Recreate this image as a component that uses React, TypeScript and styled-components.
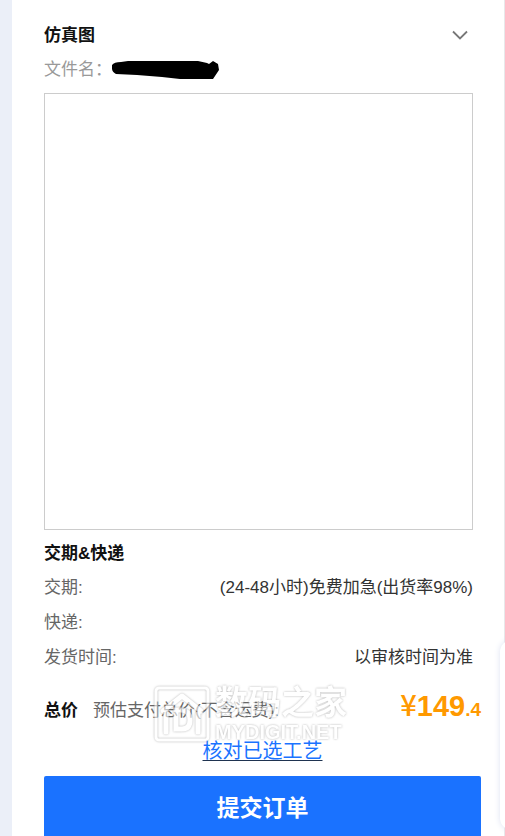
import React from "react";
import styled, { createGlobalStyle } from "styled-components";

const GlobalStyle = createGlobalStyle`
  * { box-sizing: border-box; }
  body {
    margin: 0;
    background: #ebeff8;
    color: #333;
    font: 17px/24px "Liberation Sans", "Noto Sans CJK SC", sans-serif;
  }
`;

const Page = styled.div`
  position: relative;
  min-height: 100vh;
  padding-left: 12px;
  overflow: hidden;
`;

const Panel = styled.main`
  display: flex;
  flex-direction: column;
  min-height: 100vh;
  padding-top: 24px;
  background: #fff;
  border-right: 1px solid #e8e8ea;
`;

const Section = styled.section`
  display: flex;
  flex-direction: column;
  padding: 0 31px 0 32px;
`;

const SectionHeader = styled.header`
  display: flex;
  align-items: center;
  justify-content: space-between;
`;

const Title = styled.h2`
  margin: 0;
  color: #111;
  font-size: 17px;
  line-height: 24px;
  font-weight: 700;
`;

const Toggle = styled.button`
  display: flex;
  padding: 0 5px;
  border: 0;
  background: none;
  cursor: pointer;
`;

const FileRow = styled.div`
  display: flex;
  align-items: center;
  margin-top: 10px;
  color: #999;
`;

const Preview = styled.div`
  height: 437px;
  margin: 11px 0 12px;
  border: 1px solid #ccc;
`;

const Details = styled.dl`
  display: flex;
  flex-direction: column;
  gap: 11px;
  margin: 10px 0 0;
`;

const DetailRow = styled.div`
  display: flex;
  justify-content: space-between;
`;

const Term = styled.dt`
  color: #666;
`;

const Value = styled.dd`
  margin: 0;
  color: #333;
`;

const Summary = styled.section`
  display: flex;
  flex-direction: column;
  flex: 1;
  padding: 0 23px 0 32px;
`;

const TotalRow = styled.div`
  position: relative;
  display: flex;
  align-items: baseline;
  margin-top: 18px;
  height: 37px;
`;

const TotalNote = styled.span`
  margin-left: 15px;
  color: #666;
`;

const Price = styled.strong`
  margin-left: auto;
  color: #ff9900;
  font-size: 29px;
  line-height: 36px;
`;

const Yen = styled.span`
  font-family: "Noto Sans CJK SC", sans-serif;
  font-weight: 500;
  line-height: 1;
`;

const Cents = styled.span`
  font-size: 19px;
  line-height: 1;
`;

const CheckLink = styled.a`
  align-self: center;
  margin-top: 12px;
  color: #1a73ff;
  font-size: 20px;
  line-height: 28px;
  text-decoration: underline #1f3350 1px;
  text-underline-offset: 2px;
`;

const Submit = styled.button`
  flex: 1;
  min-height: 60px;
  margin-top: 11px;
  padding: 3px 0 0;
  border: 0;
  border-radius: 2px 2px 0 0;
  background: #1a72ff;
  color: #fff;
  font: 700 23px/32px "Liberation Sans", "Noto Sans CJK SC", sans-serif;
  cursor: pointer;
`;

const Watermark = styled.div`
  position: absolute;
  left: 110px;
  top: -3px;
  display: flex;
  align-items: center;
  gap: 5px;
  color: #fff;
  opacity: 0.6;
  filter: drop-shadow(0 0 1px #888);
  pointer-events: none;
`;

const WatermarkText = styled.div`
  display: flex;
  flex-direction: column;
  font-weight: 700;
`;

const WatermarkName = styled.span`
  font-size: 33px;
  line-height: 36px;
`;

const WatermarkSite = styled.span`
  font-size: 20px;
  line-height: 22px;
`;

const SideDock = styled.aside`
  position: absolute;
  right: -55px;
  bottom: 6px;
  width: 60px;
  height: 190px;
  border-radius: 12px;
  background: #fff;
  box-shadow: 0 0 6px #dde2f2;
`;

const details = [
  { term: "交期:", value: "(24-48小时)免费加急(出货率98%)" },
  { term: "快递:", value: "" },
  { term: "发货时间:", value: "以审核时间为准" },
];

const Chevron = () => (
  <svg width="16" height="12" viewBox="0 0 16 12" fill="none" aria-hidden="true">
    <path d="M1 1.5 8 8.5 15 1.5" stroke="#777" strokeWidth="1.8" />
  </svg>
);

const Redaction = () => (
  <svg width="110" height="22" viewBox="2 0 110 22" aria-hidden="true">
    <path d="M2 6Q4 3 11 3L18 2H88L97 4 99 5 103 2 108 5 109 11 103 20H70L52 18 27 16 6 15Q1 13 2 6Z" />
  </svg>
);

const WatermarkLogo = () => (
  <svg width="56" height="56" viewBox="0 0 56 56" fill="none" stroke="currentColor" aria-hidden="true">
    <rect x="2" y="2" width="52" height="52" rx="3" strokeWidth="3" />
    <path d="M12 46V28M9 25 28 10 47 25M44 28V46" strokeWidth="5" strokeLinecap="round" strokeLinejoin="round" />
    <path d="M22 24V43H28Q36 43 36 34T28 24Z" strokeWidth="5" />
  </svg>
);

export default function App() {
  return (
    <Page>
      <GlobalStyle />
      <Panel>
        <Section>
          <SectionHeader>
            <Title>仿真图</Title>
            <Toggle type="button" aria-label="仿真图">
              <Chevron />
            </Toggle>
          </SectionHeader>
          <FileRow>
            文件名：
            <Redaction />
          </FileRow>
          <Preview />
          <Title>交期&amp;快递</Title>
          <Details>
            {details.map(({ term, value }) => (
              <DetailRow key={term}>
                <Term>{term}</Term>
                <Value>{value}</Value>
              </DetailRow>
            ))}
          </Details>
        </Section>
        <Summary>
          <TotalRow>
            <Title>总价</Title>
            <TotalNote>预估支付总价(不含运费):</TotalNote>
            <Price>
              <Yen>¥</Yen>149<Cents>.4</Cents>
            </Price>
            <Watermark>
              <WatermarkLogo />
              <WatermarkText>
                <WatermarkName>数码之家</WatermarkName>
                <WatermarkSite>MYDIGIT.NET</WatermarkSite>
              </WatermarkText>
            </Watermark>
          </TotalRow>
          <CheckLink href="#craft">核对已选工艺</CheckLink>
          <Submit type="button">提交订单</Submit>
        </Summary>
      </Panel>
      <SideDock />
    </Page>
  );
}
